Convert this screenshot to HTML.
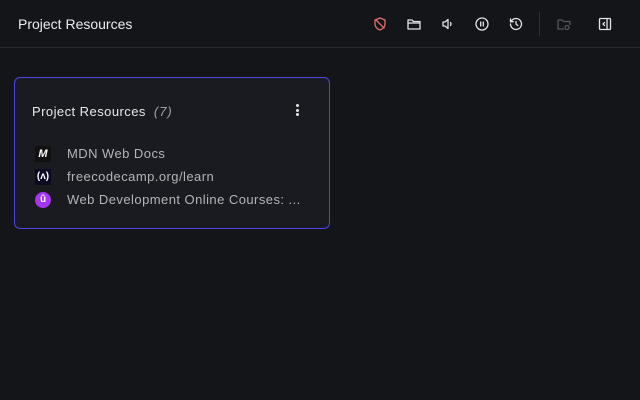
<!DOCTYPE html>
<html><head><style>
*{margin:0;padding:0;box-sizing:border-box}
body{width:640px;height:400px;background:#141519;font-family:"Liberation Sans",sans-serif;color:#e4e4e7;position:relative;overflow:hidden}
.top{position:absolute;left:0;top:0;width:640px;height:48px;border-bottom:1px solid #2a2b30}
.title{position:absolute;left:18px;top:16px;font-size:14px;color:#ececef}
.ic{position:absolute;top:16px;width:16px;height:16px}
.sep{position:absolute;left:539px;top:12px;width:1px;height:24px;background:#2e2f35}
.card{position:absolute;left:14px;top:77px;width:316px;height:152px;border:1px solid #4f46e5;border-radius:6px;background:#1a1b21}
.ct{position:absolute;left:17px;top:26px;font-size:13px;color:#e8e8ea;letter-spacing:0.45px}
.cnt{font-style:italic;color:#a1a1aa;margin-left:8px;letter-spacing:1px}
.dots{position:absolute;left:281px;top:26px;width:3px}
.dots i{display:block;width:3px;height:3px;border-radius:50%;background:#e4e4e7;margin-bottom:1.5px}
.row{position:absolute;left:20px;font-size:13px;color:#b4b4b8;height:16px;letter-spacing:0.45px}
.row span{position:absolute;left:32px;top:0;white-space:nowrap}
.fav{position:absolute;left:0;top:0;width:16px;height:16px;letter-spacing:0}
</style></head><body>
<div class="top">
<div class="title">Project Resources</div>
<svg class="ic" style="left:372px" viewBox="0 0 16 16" fill="none" stroke="#e0706a" stroke-width="1.3" stroke-linecap="round" stroke-linejoin="round"><path d="M8 2l5 2v4c0 3-2.5 5-5 6-2.5-1-5-3-5-6V4z"/><path d="M4 4l8 8"/></svg>
<svg class="ic" style="left:406px" viewBox="0 0 16 16" fill="none" stroke="#e4e4e7" stroke-width="1.3" stroke-linejoin="round"><path d="M2 4h4l1.5 1.5H14v7.5H2z"/><path d="M2 7h12"/></svg>
<svg class="ic" style="left:440px" viewBox="0 0 16 16" fill="none" stroke="#e4e4e7" stroke-width="1.3" stroke-linejoin="round" stroke-linecap="round"><path d="M3 6h2l3-2.5v9L5 10H3z"/><path d="M10.5 6.5q1 1.5 0 3"/></svg>
<svg class="ic" style="left:474px" viewBox="0 0 16 16" fill="none" stroke="#e4e4e7" stroke-width="1.3" stroke-linecap="round"><circle cx="8" cy="8" r="6"/><path d="M6.7 6v4M9.3 6v4"/></svg>
<svg class="ic" style="left:508px" viewBox="0 0 16 16" fill="none" stroke="#e4e4e7" stroke-width="1.3" stroke-linecap="round" stroke-linejoin="round"><path d="M2.5 8a5.5 5.5 0 1 0 1.6-3.9L2.5 5.7"/><path d="M2.5 3v2.7h2.7"/><path d="M8 5.5V8l1.8 1.5"/></svg>
<div class="sep"></div>
<svg class="ic" style="left:556px" viewBox="0 0 16 16" fill="none" stroke="#55565c" stroke-width="1.3" stroke-linejoin="round"><path d="M2 4h4l1.5 1.5H14V9"/><path d="M2 4v9h6"/><circle cx="11" cy="11.5" r="2"/></svg>
<svg class="ic" style="left:597px" viewBox="0 0 16 16" fill="none" stroke="#e4e4e7" stroke-width="1.3" stroke-linejoin="round" stroke-linecap="round"><rect x="2.5" y="2.5" width="11" height="11" rx="1"/><path d="M10 2.5v11M7.5 6.5L6 8l1.5 1.5"/></svg>
</div>
<div class="card">
<div class="ct">Project Resources<span class="cnt">(7)</span></div>
<div class="dots"><i></i><i></i><i></i></div>
<div class="row" style="top:68px"><div class="fav" style="background:#111;color:#fff;font-size:11px;font-style:italic;font-weight:bold;text-align:center;line-height:16px">M</div><span>MDN Web Docs</span></div>
<div class="row" style="top:91px"><div class="fav" style="background:#0a0a23;color:#fff;font-size:10px;font-weight:bold;text-align:center;line-height:16px">(ʌ)</div><span>freecodecamp.org/learn</span></div>
<div class="row" style="top:114px"><div class="fav" style="background:#a435f0;border-radius:50%;color:#fff;font-size:10px;font-weight:bold;text-align:center;line-height:16px">û</div><span>Web Development Online Courses: ...</span></div>
</div>
</body></html>
